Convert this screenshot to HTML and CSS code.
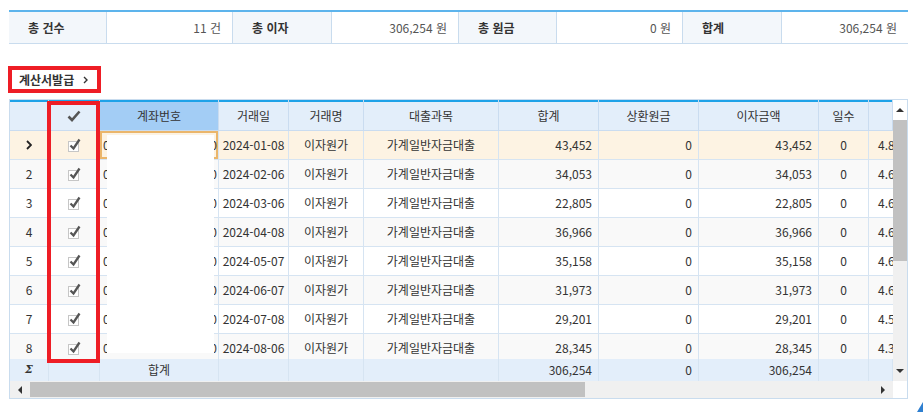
FILE: index.html
```html
<!DOCTYPE html>
<html lang="ko">
<head>
<meta charset="utf-8">
<title>계산서발급</title>
<link rel="stylesheet" href="styles.css">
</head>
<body>
<div class="page">
  <div class="summary">
    <div class="lbl">총 건수</div><div class="val">11 건</div>
    <div class="lbl">총 이자</div><div class="val">306,254 원</div>
    <div class="lbl">총 원금</div><div class="val">0 원</div>
    <div class="lbl">합계</div><div class="val">306,254 원</div>
  </div>

  <div class="toolbar">
    <button class="issue-btn" type="button">계산서발급 <svg class="btn-chev" width="5" height="8" viewBox="0 0 5 8"><path d="M1 1 L4 4 L1 7" fill="none" stroke="#333" stroke-width="1.4"/></svg></button>
  </div>

  <div class="grid">
    <div class="gmain">
      <div class="row head">
        <div class="c"></div>
        <div class="c"><svg width="14" height="12" viewBox="0 0 14 12"><path d="M1.5 6.5 L5 10 L12.5 1.5" fill="none" stroke="#555" stroke-width="2.6"/></svg></div>
        <div class="c hsel">계좌번호</div>
        <div class="c">거래일</div>
        <div class="c">거래명</div>
        <div class="c">대출과목</div>
        <div class="c">합계</div>
        <div class="c">상환원금</div>
        <div class="c">이자금액</div>
        <div class="c">일수</div>
        <div class="c"></div>
      </div>

      <div class="body">
        <div class="row sel">
          <div class="c ctr"><svg width="6" height="10" viewBox="0 0 6 10"><path d="M1 1 L5 5 L1 9" fill="none" stroke="#222" stroke-width="1.8"/></svg></div>
          <div class="c ctr"><svg class="chk" width="14" height="14" viewBox="0 0 14 14"><rect x="1.5" y="3.5" width="10" height="10" fill="#fff" stroke="#c6c6c6"/><path d="M3.5 7.5 L6.5 10.5 L12.5 1.5" fill="none" stroke="#555" stroke-width="2.3"/></svg></div>
          <div class="c acct focus"><span>0</span><span>0</span></div>
          <div class="c ctr">2024-01-08</div>
          <div class="c ctr">이자원가</div>
          <div class="c ctr">가계일반자금대출</div>
          <div class="c r">43,452</div>
          <div class="c r">0</div>
          <div class="c r">43,452</div>
          <div class="c ctr">0</div>
          <div class="c last">4.85</div>
        </div>
        <div class="row alt">
          <div class="c ctr">2</div>
          <div class="c ctr"><svg class="chk" width="14" height="14" viewBox="0 0 14 14"><rect x="1.5" y="3.5" width="10" height="10" fill="#fff" stroke="#c6c6c6"/><path d="M3.5 7.5 L6.5 10.5 L12.5 1.5" fill="none" stroke="#555" stroke-width="2.3"/></svg></div>
          <div class="c acct"><span>0</span><span>0</span></div>
          <div class="c ctr">2024-02-06</div>
          <div class="c ctr">이자원가</div>
          <div class="c ctr">가계일반자금대출</div>
          <div class="c r">34,053</div>
          <div class="c r">0</div>
          <div class="c r">34,053</div>
          <div class="c ctr">0</div>
          <div class="c last">4.65</div>
        </div>
        <div class="row">
          <div class="c ctr">3</div>
          <div class="c ctr"><svg class="chk" width="14" height="14" viewBox="0 0 14 14"><rect x="1.5" y="3.5" width="10" height="10" fill="#fff" stroke="#c6c6c6"/><path d="M3.5 7.5 L6.5 10.5 L12.5 1.5" fill="none" stroke="#555" stroke-width="2.3"/></svg></div>
          <div class="c acct"><span>0</span><span>0</span></div>
          <div class="c ctr">2024-03-06</div>
          <div class="c ctr">이자원가</div>
          <div class="c ctr">가계일반자금대출</div>
          <div class="c r">22,805</div>
          <div class="c r">0</div>
          <div class="c r">22,805</div>
          <div class="c ctr">0</div>
          <div class="c last">4.65</div>
        </div>
        <div class="row alt">
          <div class="c ctr">4</div>
          <div class="c ctr"><svg class="chk" width="14" height="14" viewBox="0 0 14 14"><rect x="1.5" y="3.5" width="10" height="10" fill="#fff" stroke="#c6c6c6"/><path d="M3.5 7.5 L6.5 10.5 L12.5 1.5" fill="none" stroke="#555" stroke-width="2.3"/></svg></div>
          <div class="c acct"><span>0</span><span>0</span></div>
          <div class="c ctr">2024-04-08</div>
          <div class="c ctr">이자원가</div>
          <div class="c ctr">가계일반자금대출</div>
          <div class="c r">36,966</div>
          <div class="c r">0</div>
          <div class="c r">36,966</div>
          <div class="c ctr">0</div>
          <div class="c last">4.65</div>
        </div>
        <div class="row">
          <div class="c ctr">5</div>
          <div class="c ctr"><svg class="chk" width="14" height="14" viewBox="0 0 14 14"><rect x="1.5" y="3.5" width="10" height="10" fill="#fff" stroke="#c6c6c6"/><path d="M3.5 7.5 L6.5 10.5 L12.5 1.5" fill="none" stroke="#555" stroke-width="2.3"/></svg></div>
          <div class="c acct"><span>0</span><span>0</span></div>
          <div class="c ctr">2024-05-07</div>
          <div class="c ctr">이자원가</div>
          <div class="c ctr">가계일반자금대출</div>
          <div class="c r">35,158</div>
          <div class="c r">0</div>
          <div class="c r">35,158</div>
          <div class="c ctr">0</div>
          <div class="c last">4.65</div>
        </div>
        <div class="row alt">
          <div class="c ctr">6</div>
          <div class="c ctr"><svg class="chk" width="14" height="14" viewBox="0 0 14 14"><rect x="1.5" y="3.5" width="10" height="10" fill="#fff" stroke="#c6c6c6"/><path d="M3.5 7.5 L6.5 10.5 L12.5 1.5" fill="none" stroke="#555" stroke-width="2.3"/></svg></div>
          <div class="c acct"><span>0</span><span>0</span></div>
          <div class="c ctr">2024-06-07</div>
          <div class="c ctr">이자원가</div>
          <div class="c ctr">가계일반자금대출</div>
          <div class="c r">31,973</div>
          <div class="c r">0</div>
          <div class="c r">31,973</div>
          <div class="c ctr">0</div>
          <div class="c last">4.65</div>
        </div>
        <div class="row">
          <div class="c ctr">7</div>
          <div class="c ctr"><svg class="chk" width="14" height="14" viewBox="0 0 14 14"><rect x="1.5" y="3.5" width="10" height="10" fill="#fff" stroke="#c6c6c6"/><path d="M3.5 7.5 L6.5 10.5 L12.5 1.5" fill="none" stroke="#555" stroke-width="2.3"/></svg></div>
          <div class="c acct"><span>0</span><span>0</span></div>
          <div class="c ctr">2024-07-08</div>
          <div class="c ctr">이자원가</div>
          <div class="c ctr">가계일반자금대출</div>
          <div class="c r">29,201</div>
          <div class="c r">0</div>
          <div class="c r">29,201</div>
          <div class="c ctr">0</div>
          <div class="c last">4.55</div>
        </div>
        <div class="row alt">
          <div class="c ctr">8</div>
          <div class="c ctr"><svg class="chk" width="14" height="14" viewBox="0 0 14 14"><rect x="1.5" y="3.5" width="10" height="10" fill="#fff" stroke="#c6c6c6"/><path d="M3.5 7.5 L6.5 10.5 L12.5 1.5" fill="none" stroke="#555" stroke-width="2.3"/></svg></div>
          <div class="c acct"><span>0</span><span>0</span></div>
          <div class="c ctr">2024-08-06</div>
          <div class="c ctr">이자원가</div>
          <div class="c ctr">가계일반자금대출</div>
          <div class="c r">28,345</div>
          <div class="c r">0</div>
          <div class="c r">28,345</div>
          <div class="c ctr">0</div>
          <div class="c last">4.35</div>
        </div>
      </div>

      <div class="row foot">
        <div class="c ctr sigma">Σ</div>
        <div class="c"></div>
        <div class="c ctr">합계</div>
        <div class="c"></div>
        <div class="c"></div>
        <div class="c"></div>
        <div class="c r">306,254</div>
        <div class="c r">0</div>
        <div class="c r">306,254</div>
        <div class="c"></div>
        <div class="c"></div>
      </div>

      <div class="hscroll">
        <div class="arrow"><svg width="4" height="8" viewBox="0 0 4 8"><path d="M4 0 L0 4 L4 8 Z" fill="#333"/></svg></div>
        <div class="hthumb"></div>
        <div class="htrack"></div>
        <div class="arrow"><svg width="4" height="8" viewBox="0 0 4 8"><path d="M0 0 L4 4 L0 8 Z" fill="#333"/></svg></div>
      </div>
    </div>

    <div class="vscroll">
      <div class="vup"><svg width="8" height="4" viewBox="0 0 8 4"><path d="M0 4 L4 0 L8 4 Z" fill="#333"/></svg></div>
      <div class="vthumb"></div>
      <div class="vtrack"><div class="vdown"><svg width="8" height="4" viewBox="0 0 8 4"><path d="M0 0 L8 0 L4 4 Z" fill="#333"/></svg></div></div>
      <div class="vcorner"></div>
    </div>

    <div class="redact"></div>
    <div class="highlight"></div>
  </div>

  <svg class="corner-mark" width="6" height="10" viewBox="0 0 6 10"><path d="M6 0 L6 10 L0 10 Z" fill="#2e7fd0"/></svg>
</div>
</body>
</html>
```

FILE: styles.css
```css
* {
  box-sizing: border-box;
  margin: 0;
  padding: 0;
}

body {
  font-family: "Noto Sans CJK KR", "Noto Sans", sans-serif;
  font-size: 12px;
  color: #333;
  background: #fff;
}

.page {
  position: relative;
  width: 923px;
  height: 412px;
  overflow: hidden;
  padding: 10px 15px 0 9px;
}

/* summary bar */
.summary {
  display: grid;
  grid-template-columns: 98px 126px 99px 127px 98px 126px 99px 126px;
  width: 899px;
  height: 34px;
  border-top: 2px solid #5db4ec;
  border-bottom: 1px solid #c9dcee;
}

.summary > div {
  display: flex;
  align-items: center;
  line-height: 16px;
  border-right: 1px solid #c9dcee;
}

.summary > div:last-child {
  border-right: none;
}

.lbl {
  background: #f3f7fb;
  font-weight: 700;
  padding-left: 19px;
  color: #333;
}

.val {
  justify-content: flex-end;
  padding-right: 11px;
  color: #555;
}

/* toolbar */
.toolbar {
  margin-top: 22px;
  display: flex;
}

.issue-btn {
  margin-left: -1px;
  width: 93px;
  height: 27px;
  border: 4px solid #ee1d25;
  background: #fff;
  font-family: inherit;
  font-size: 12px;
  font-weight: 700;
  color: #333;
  display: flex;
  align-items: center;
  gap: 9px;
  padding: 0 0 0 7px;
  line-height: 16px;
}

/* grid */
.grid {
  position: relative;
  margin-top: 6px;
  display: flex;
  width: 899px;
  height: 300px;
  border: 1px solid #c9dcee;
}

.gmain {
  width: 883px;
  display: flex;
  flex-direction: column;
}

.row {
  display: grid;
  grid-template-columns: 39px 51px 119px 70px 75px 135px 100px 100px 120px 50px 24px;
}

.c {
  display: flex;
  align-items: center;
  overflow: hidden;
  white-space: nowrap;
  border-right: 1px solid #d6e4f2;
  border-bottom: 1px solid #d6e4f2;
  padding: 0 6px;
  line-height: 16px;
}

.ctr { justify-content: center; }
.r { justify-content: flex-end; }

.head {
  height: 31px;
}

.head .c {
  justify-content: center;
  background: linear-gradient(#1ea2e8, #1ea2e8) 0 0 / 100% 2px no-repeat, #e3eefa;
  border-right-color: #cadcf0;
  border-bottom-color: #cadcf0;
  padding-top: 2px;
}

.head .c.hsel {
  background: linear-gradient(#1ea2e8, #1ea2e8) 0 0 / 100% 2px no-repeat, #a3cdf5;
}

.body {
  height: 228px;
  overflow: hidden;
}

.body .row {
  height: 29px;
  flex: none;
}

.row.alt .c { background: #f9f9f9; }
.row.sel .c { background: #fdf3e3; }

.acct {
  justify-content: space-between;
  padding: 0 1px 0 3px;
}

.focus {
  box-shadow: inset 0 0 0 2px #ebb66b;
}

.last {
  padding: 0 0 0 9px;
  border-right: none;
}

.chk {
  display: block;
}

.foot {
  height: 22px;
}

.foot .c {
  background: #e3eefa;
  border-bottom: none;
}

.sigma {
  font-family: "DejaVu Serif", serif;
  font-style: italic;
  font-weight: 700;
  font-size: 11px;
}

/* horizontal scrollbar */
.hscroll {
  height: 17px;
  display: flex;
  background: #f0f0f0;
}

.hscroll .arrow {
  width: 20px;
  display: flex;
  align-items: center;
  justify-content: center;
}

.hthumb {
  width: 555px;
  margin: 1px 0;
  background: #c1c1c1;
}

.htrack {
  flex: 1;
}

/* vertical scrollbar */
.vscroll {
  width: 14px;
  display: flex;
  flex-direction: column;
}

.vup {
  height: 20px;
  background: #fff;
  display: flex;
  align-items: center;
  justify-content: center;
}

.vthumb {
  height: 141px;
  background: #c1c1c1;
}

.vtrack {
  flex: 1;
  background: #f0f0f0;
  display: flex;
  flex-direction: column;
  justify-content: flex-end;
}

.vdown {
  height: 20px;
  display: flex;
  align-items: center;
  justify-content: center;
}

.vcorner {
  height: 17px;
  background: #fff;
}

/* overlays */
.redact {
  position: absolute;
  left: 97px;
  top: 35px;
  width: 107px;
  height: 218px;
  background: #fff;
}

.highlight {
  position: absolute;
  left: 37px;
  top: 1px;
  width: 53px;
  height: 262px;
  border: 4px solid #ee1d25;
}

.corner-mark {
  position: absolute;
  right: 0;
  bottom: 0;
}
```
